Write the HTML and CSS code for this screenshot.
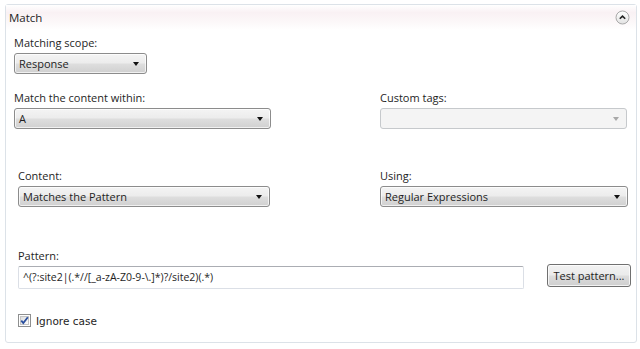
FILE: index.html
```html
<!DOCTYPE html>
<html lang="en">
<head>
    <meta charset="UTF-8">
    <title>Match</title>
    <link rel="stylesheet" href="styles.css">
</head>
<body>
    <div class="panel">
        <div class="panel-head">
            <span class="panel-title">Match</span>
            <span class="collapse-btn">
                <svg width="15" height="15" viewBox="0 0 15 15"><defs><linearGradient id="cg" x1="0" y1="0" x2="0" y2="1"><stop offset="0" stop-color="#ffffff"/><stop offset="1" stop-color="#e2e2e2"/></linearGradient></defs><circle cx="7.5" cy="7.5" r="6.5" fill="url(#cg)" stroke="#a9a9a9"/><path d="M4.8 8.8 L7.5 6.1 L10.2 8.8" fill="none" stroke="#222" stroke-width="1.6"/></svg>
            </span>
        </div>
        <div class="panel-body">
            <div class="field scope">
                <div class="label">Matching scope:</div>
                <div class="combo w-scope"><span>Response</span><i class="arrow"></i></div>
            </div>
            <div class="row row-within">
                <div class="field">
                    <div class="label">Match the content within:</div>
                    <div class="combo w-within"><span>A</span><i class="arrow"></i></div>
                </div>
                <div class="field">
                    <div class="label">Custom tags:</div>
                    <div class="combo combo-disabled w-tags"><span></span><i class="arrow"></i></div>
                </div>
            </div>
            <div class="row row-content">
                <div class="field indent">
                    <div class="label">Content:</div>
                    <div class="combo w-content"><span>Matches the Pattern</span><i class="arrow"></i></div>
                </div>
                <div class="field">
                    <div class="label">Using:</div>
                    <div class="combo w-using"><span>Regular Expressions</span><i class="arrow"></i></div>
                </div>
            </div>
            <div class="field indent pattern">
                <div class="label">Pattern:</div>
                <div class="pattern-line">
                    <div class="textbox">^(?:site2|(.*//[_a-zA-Z0-9-\.]*)?/site2)(.*)</div>
                    <div class="button">Test pattern...</div>
                </div>
            </div>
            <label class="check indent">
                <span class="check-box">
                    <svg width="13" height="13" viewBox="0 0 13 13"><defs><linearGradient id="bg" x1="0" y1="0" x2="1" y2="1"><stop offset="0" stop-color="#dcdcdc"/><stop offset="1" stop-color="#ffffff"/></linearGradient></defs><rect x="0.5" y="0.5" width="12" height="12" fill="#fff" stroke="#8e8f8f"/><rect x="2.5" y="2.5" width="8" height="8" fill="url(#bg)" stroke="#c4c4c4"/><path d="M3.3 6.6 L5.3 9 L9.8 3.2" fill="none" stroke="#2a4f9e" stroke-width="1.8"/></svg>
                </span>
                <span class="check-text">Ignore case</span>
            </label>
        </div>
    </div>
</body>
</html>
```

FILE: styles.css
```css
html, body {
    margin: 0;
    padding: 0;
    background: #fff;
}
body {
    font-family: 'Open Sans', 'Noto Sans', Arial, sans-serif;
    font-size: 11px;
    color: #1e1e1e;
    padding: 4px 3px 0 5px;
}
.panel {
    border: 1px solid #dce2e8;
    border-radius: 3px;
    height: 339px;
    box-sizing: border-box;
}
.panel-head {
    height: 25px;
    display: flex;
    align-items: center;
    justify-content: space-between;
    padding: 0 6px 0 3px;
    background: linear-gradient(to bottom, #ffffff 0%, #f9f1f4 30%, #fcf8f9 70%, #ffffff 100%);
}
.panel-title {
    font-size: 11.5px;
}
.collapse-btn {
    display: flex;
}
.panel-body {
    padding: 5px 0 0 8px;
}
.label {
    line-height: 15px;
    margin-bottom: 3px;
}
.combo {
    height: 21px;
    box-sizing: border-box;
    border: 1px solid #8c8c8c;
    border-radius: 3px;
    background: linear-gradient(to bottom, #f4f4f4 0%, #ececec 48%, #dedede 52%, #d0d0d0 100%);
    display: flex;
    align-items: center;
    justify-content: space-between;
    padding: 0 7px 0 4px;
    box-shadow: inset 0 0 0 1px rgba(255,255,255,0.7);
}
.arrow {
    width: 0;
    height: 0;
    border-left: 3.5px solid transparent;
    border-right: 3.5px solid transparent;
    border-top: 4px solid #111;
}
.combo-disabled {
    border-color: #c6c9cc;
    background: #f4f4f4;
    box-shadow: none;
}
.combo-disabled .arrow {
    border-top-color: #a8a8a8;
}
.w-scope { width: 133px; }
.w-within { width: 257px; }
.w-tags { width: 247px; }
.w-content { width: 252px; }
.w-using { width: 248px; }

.scope {
    margin-bottom: 16px;
}
.row {
    display: grid;
    grid-template-columns: 366px 1fr;
}
.row-within {
    margin-bottom: 39px;
}
.row-content {
    margin-bottom: 41px;
}
.indent {
    padding-left: 4px;
}
.pattern .label {
    margin-bottom: 1px;
}
.pattern-line {
    display: flex;
    align-items: flex-start;
}
.textbox {
    width: 506px;
    height: 23px;
    box-sizing: border-box;
    border: 1px solid #dbdfe6;
    border-top-color: #abadb3;
    border-radius: 2px;
    padding: 0 4px;
    line-height: 21px;
    font-size: 10.5px;
    margin-top: 2px;
}
.button {
    margin-left: 23px;
    width: 84px;
    height: 23px;
    box-sizing: border-box;
    border: 1px solid #707070;
    border-radius: 3px;
    background: linear-gradient(to bottom, #f2f2f2 0%, #ebebeb 48%, #dddddd 52%, #cfcfcf 100%);
    box-shadow: inset 0 0 0 1px rgba(255,255,255,0.75);
    display: flex;
    align-items: center;
    justify-content: center;
}
.check {
    display: flex;
    align-items: center;
    margin-top: 25px;
}
.check-box {
    display: flex;
}
.check-text {
    margin-left: 5px;
    font-family: 'DejaVu Sans', Verdana, sans-serif;
    font-size: 10.5px;
}
```
